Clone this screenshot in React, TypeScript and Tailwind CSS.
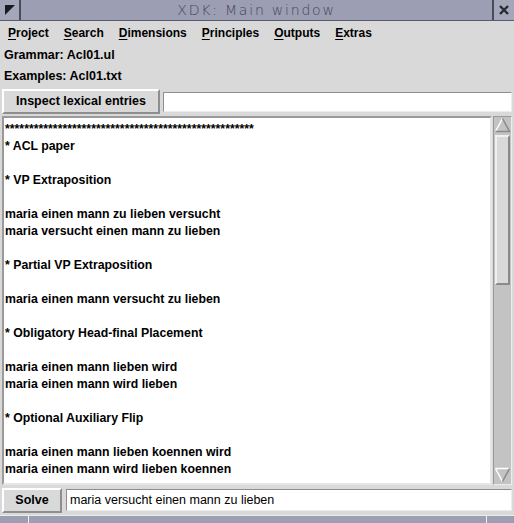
import React from 'react'

const MENUS = ['Project', 'Search', 'Dimensions', 'Principles', 'Outputs', 'Extras']

const LINES = [
  '*'.repeat(52),
  '* ACL paper',
  '',
  '* VP Extraposition',
  '',
  'maria einen mann zu lieben versucht',
  'maria versucht einen mann zu lieben',
  '',
  '* Partial VP Extraposition',
  '',
  'maria einen mann versucht zu lieben',
  '',
  '* Obligatory Head-final Placement',
  '',
  'maria einen mann lieben wird',
  'maria einen mann wird lieben',
  '',
  '* Optional Auxiliary Flip',
  '',
  'maria einen mann lieben koennen wird',
  'maria einen mann wird lieben koennen',
]

const font = { fontFamily: '"Liberation Sans", Arial, sans-serif' }

function TkButton({ label, className }: { label: string; className: string }) {
  return (
    <div className={`flex items-center justify-center border border-t-white border-l-white border-r-[#8e8e8e] border-b-[#8e8e8e] bg-[#d9d9d9] text-[12.5px] font-bold text-black ${className}`}>
      {label}
    </div>
  )
}

export default function App() {
  return (
    <div className="w-[514px] h-[523px] bg-[#d9d9d9] flex flex-col overflow-hidden select-none" style={font}>
      {/* Title bar */}
      <div className="h-[21px] flex bg-[#9c9eb4] border-b border-[#5a5c6e] shrink-0">
        <div className="w-[21px] h-full flex items-center justify-center border-r-2 border-[#4a4c5c] bg-[#a4a6ba]">
          <svg width="12" height="12" viewBox="0 0 12 12">
            <polygon points="1,1 11,1 1,11" fill="#1a1a22" />
          </svg>
        </div>
        <div className="flex-1 flex items-center justify-center text-[14px] text-[#454658] tracking-[1.8px]" style={{ fontFamily: '"DejaVu Sans", sans-serif', fontWeight: 300 }}>
          XDK: Main window
        </div>
        <div className="w-[22px] h-full flex items-center justify-center border-l-2 border-[#4a4c5c] bg-[#a4a6ba]">
          <svg width="12" height="12" viewBox="0 0 12 12">
            <path d="M2 2 L10 10 M10 2 L2 10" stroke="#2a2a34" strokeWidth="2.4" />
          </svg>
        </div>
      </div>

      {/* Menu bar */}
      <div className="h-[24px] flex items-center gap-[15px] pl-[8px] text-[12px] font-bold text-black shrink-0">
        {MENUS.map((m) => (
          <span key={m}>
            <span className="underline underline-offset-2">{m[0]}</span>
            {m.slice(1)}
          </span>
        ))}
      </div>

      {/* File labels */}
      <div className="h-[21px] flex items-center pl-[4px] text-[12.5px] font-bold text-black shrink-0">Grammar: Acl01.ul</div>
      <div className="h-[21px] flex items-center pl-[4px] text-[12.5px] font-bold text-black shrink-0">Examples: Acl01.txt</div>

      {/* Inspect row */}
      <div className="h-[29px] flex items-center pl-[2px] pr-[2px] gap-[3px] shrink-0">
        <TkButton label="Inspect lexical entries" className="w-[158px] h-[25px] border-2" />
        <div className="flex-1 h-[20px] bg-white border border-t-[#8e8e8e] border-l-[#8e8e8e] border-r-[#ececec] border-b-[#ececec]" />
      </div>

      {/* Text area + scrollbar */}
      <div className="flex-1 flex pl-[2px] pr-[2px] min-h-0">
        <div className="flex-1 bg-white border-2 border-t-[#9a9a9a] border-l-[#9a9a9a] border-r-[#e6e6e6] border-b-[#e6e6e6] overflow-hidden pl-[1px] pt-[3px]">
          {LINES.map((l, i) => (
            <div key={i} className="h-[17px] leading-[17px] text-[12.3px] font-bold text-black whitespace-pre">
              {l}
            </div>
          ))}
        </div>
        <div className="w-[19px] ml-[1px] bg-[#c3c3c3] border border-t-[#9a9a9a] border-l-[#9a9a9a] border-r-[#ececec] border-b-[#ececec] flex flex-col">
          <svg width="17" height="16" viewBox="0 0 17 16" className="shrink-0">
            <polygon points="8.5,1.5 15.5,14.5 1.5,14.5" fill="#c3c3c3" />
            <path d="M1.5 14.5 L8.5 1.5" stroke="#ffffff" strokeWidth="1.5" />
            <path d="M8.5 1.5 L15.5 14.5 L1.5 14.5" stroke="#8a8a8a" strokeWidth="1.5" fill="none" />
          </svg>
          <div className="h-[150px] mt-[2px] mx-[1px] bg-[#d9d9d9] border-2 border-t-[#f0f0f0] border-l-[#f0f0f0] border-r-[#8a8a8a] border-b-[#8a8a8a] shrink-0" />
          <div className="flex-1" />
          <svg width="17" height="16" viewBox="0 0 17 16" className="shrink-0 mb-[1px]">
            <polygon points="1.5,1.5 15.5,1.5 8.5,14.5" fill="#c3c3c3" />
            <path d="M1.5 1.5 L15.5 1.5 M1.5 1.5 L8.5 14.5" stroke="#ffffff" strokeWidth="1.5" />
            <path d="M15.5 1.5 L8.5 14.5" stroke="#8a8a8a" strokeWidth="1.5" />
          </svg>
        </div>
      </div>

      {/* Solve row */}
      <div className="h-[30px] flex items-center pl-[2px] pr-[2px] gap-[4px] shrink-0">
        <TkButton label="Solve" className="w-[60px] h-[25px] border-2" />
        <div className="flex-1 h-[22px] bg-white border border-t-[#8e8e8e] border-l-[#8e8e8e] border-r-[#ececec] border-b-[#ececec] flex items-center pl-[3px] text-[12.5px] text-black">
          maria versucht einen mann zu lieben
        </div>
      </div>

      {/* Bottom strip */}
      <div className="h-[8px] flex bg-[#9c9eb4] border-t border-[#ececec] shrink-0">
        <div className="w-[29px] border-r border-[#f0f0f0]" />
        <div className="flex-1" />
        <div className="w-[28px] border-l border-[#f0f0f0]" />
      </div>
    </div>
  )
}
